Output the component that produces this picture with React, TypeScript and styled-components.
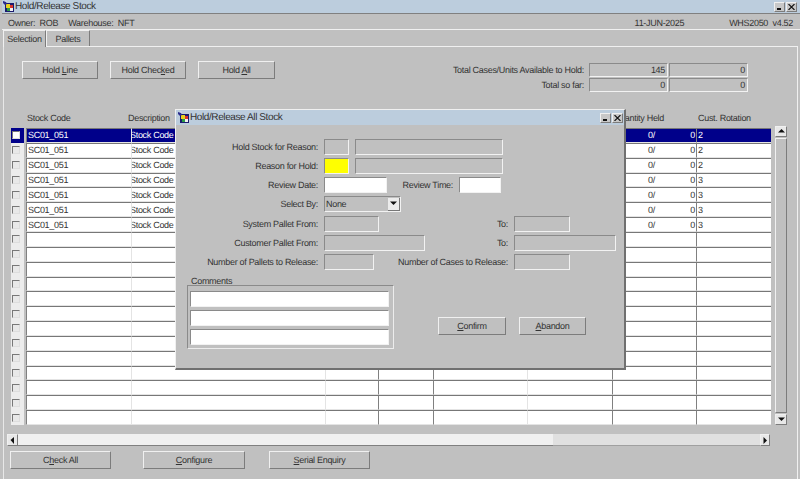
import React from "react";
import styled, { createGlobalStyle, css } from "styled-components";

const Global = createGlobalStyle`
  html, body { margin: 0; padding: 0; background: #c0c0c0; }
  * { box-sizing: border-box; }
`;

const bevelIn = css`
  border-style: solid;
  border-width: 1.5px;
  border-color: #8a8a8a #f2f2f2 #f2f2f2 #8a8a8a;
`;
const bevelOut = css`
  border-style: solid;
  border-width: 1.5px;
  border-color: #f0f0f0 #7c7c7c #7c7c7c #f0f0f0;
`;

const Screen = styled.div`
  position: relative;
  width: 800px;
  height: 479px;
  overflow: hidden;
  background: #c0c0c0;
  color: #333;
  font-family: "Liberation Sans", Arial, sans-serif;
  font-size: 9px;
  letter-spacing: -0.3px;
  text-rendering: geometricPrecision;
  display: flex;
  flex-direction: column;
  padding-left: 2px;
`;

const TitleBar = styled.div<{ $dialog?: boolean }>`
  flex: none;
  height: ${(p) => (p.$dialog ? 15 : 13)}px;
  background: #bccddd;
  display: flex;
  align-items: center;
  font-size: 10px;
  letter-spacing: -0.4px;
  color: #333;
  padding-left: ${(p) => (p.$dialog ? 1 : 0)}px;
  padding-right: ${(p) => (p.$dialog ? 1 : 3)}px;
`;
const TitleText = styled.span`
  flex: 1;
`;
const WinButton = styled.button`
  width: 11px;
  height: 10px;
  margin-left: 1px;
  padding: 0;
  background: #c8c8c8;
  ${bevelOut};
  border-width: 1px;
  color: #111;
  display: flex;
  align-items: center;
  justify-content: center;
`;

const StatusBar = styled.div`
  flex: none;
  height: 17px;
  border-top: 1px solid #808080;
  border-bottom: 1.5px solid #f0f0f0;
  display: flex;
  align-items: center;
  padding: 2px 7px 0 6px;
  gap: 10px;
`;
const Spacer = styled.span`
  flex: 1;
`;
const StatusDate = styled.span`
  margin-right: 35px;
`;

const Tabs = styled.div`
  flex: none;
  height: 16px;
  display: flex;
  align-items: flex-start;
  padding-left: 1px;
`;
const Tab = styled.div<{ $active?: boolean }>`
  position: relative;
  z-index: 1;
  background: #c0c0c0;
  display: flex;
  align-items: center;
  justify-content: center;
  width: ${(p) => (p.$active ? 43 : 44)}px;
  height: ${(p) => (p.$active ? 17 : 16)}px;
  border-left: 1px solid #f0f0f0;
  border-right: 1.5px solid #7c7c7c;
  border-top: 1px solid #f0f0f0;
`;

const Panel = styled.div`
  flex: 1;
  margin-right: 2px;
  margin-left: 1px;
  border-top: 1px solid #f0f0f0;
  border-left: 1px solid #e8e8e8;
  border-right: 1.5px solid #f0f0f0;
  display: flex;
  flex-direction: column;
`;

const Top = styled.div`
  flex: none;
  height: 66px;
  padding: 14px 49px 0 18px;
  display: flex;
  align-items: flex-start;
`;
const ActionRow = styled.div<{ $gap: number }>`
  display: flex;
  gap: ${(p) => p.$gap}px;
`;
const Button = styled.div<{ $w: number; $h?: number }>`
  width: ${(p) => p.$w}px;
  height: ${(p) => p.$h ?? 18}px;
  ${bevelOut};
  display: flex;
  align-items: center;
  justify-content: center;
  white-space: pre;
`;
const Mn = styled.span`
  text-decoration: underline;
`;

const Summary = styled.div`
  margin-left: auto;
  margin-top: 1px;
  display: grid;
  grid-template-columns: auto 79px 79px;
  grid-auto-rows: 15px;
  column-gap: 1px;
  align-items: center;
`;
const SummaryLabel = styled.span`
  text-align: right;
  margin-right: 4px;
`;
const Readout = styled.div`
  height: 14px;
  ${bevelIn};
  display: flex;
  align-items: center;
  justify-content: flex-end;
  padding-right: 2px;
`;

const TableArea = styled.div`
  flex: none;
  display: flex;
  padding-left: 7px;
  gap: 4px;
`;
const Table = styled.div`
  width: 760px;
`;
const gridCols = "15px 105px 194px 53px 55px 94px 85px 84px 75px";
const HeadRow = styled.div`
  height: 15px;
  display: grid;
  grid-template-columns: ${gridCols};
  align-items: start;
  line-height: 11px;
`;
const Head = styled.span<{ $end?: boolean; $pad?: number }>`
  white-space: nowrap;
  margin-left: ${(p) => p.$pad ?? 0}px;
  ${(p) => p.$end && "display:flex; justify-content:flex-end; padding-right: 32px;"}
`;
const Body = styled.div`
  height: 297px;
  display: grid;
  grid-template-rows: repeat(20, 1fr);
`;
const Row = styled.div<{ $selected?: boolean }>`
  display: grid;
  grid-template-columns: ${gridCols};
  color: ${(p) => (p.$selected ? "#fff" : "#333")};
`;
const CheckCell = styled.div<{ $selected?: boolean }>`
  display: flex;
  align-items: center;
  padding-left: 1px;
  margin-right: 2px;
  background: ${(p) => (p.$selected ? "#00008a" : "#ececec")};
`;
const Check = styled.span<{ $selected?: boolean }>`
  width: 8px;
  height: 8px;
  background: ${(p) => (p.$selected ? "#fff" : "#e8e8e8")};
  border-style: solid;
  border-width: 1px;
  border-color: #777 #ddd #ddd #777;
`;
const Cell = styled.div<{ $selected?: boolean; $light?: boolean; $between?: boolean; $inset?: number }>`
  background: ${(p) => (p.$selected ? "#00008a" : "#fff")};
  border-top: 1.5px solid #777;
  border-bottom: 1.5px solid #e4e4e4;
  border-left: 1.5px solid ${(p) => (p.$light ? "#e4e4e4" : "#808080")};
  overflow: hidden;
  white-space: nowrap;
  display: flex;
  align-items: center;
  justify-content: ${(p) => (p.$between ? "space-between" : "flex-start")};
  padding: 0 ${(p) => (p.$between ? 1 : 0)}px 0 ${(p) => p.$inset ?? 1}px;
`;
const Clipped = styled.span`
  margin-left: -3px;
`;

const VScroll = styled.div`
  margin-top: 13px;
  width: 12px;
  height: 299px;
  display: flex;
  flex-direction: column;
`;
const ScrollBtn = styled.div<{ $w?: number; $h?: number }>`
  flex: none;
  width: ${(p) => p.$w ?? 12}px;
  height: ${(p) => p.$h ?? 11}px;
  background: #e8e8e8;
  ${bevelOut};
  border-width: 1px;
  display: flex;
  align-items: center;
  justify-content: center;
`;
const VThumb = styled.div`
  flex: 1;
  margin: 1px 0;
  ${bevelOut};
  border-width: 1px;
  background: #c0c0c0;
`;
const HScroll = styled.div`
  margin: 9px 0 0 3px;
  width: 763px;
  height: 12px;
  display: flex;
`;
const HThumb = styled.div`
  width: 535px;
  background: #f0f0f0;
  border-bottom: 1px solid #808080;
`;
const HTrack = styled.div`
  flex: 1;
  background: #e0e0e0;
  border-bottom: 1px solid #a0a0a0;
`;
const Bottom = styled.div`
  margin: 5px 0 0 6px;
  display: flex;
`;
const BottomBtn = styled(Button)<{ $ml?: number }>`
  margin-left: ${(p) => p.$ml ?? 0}px;
`;

const Dialog = styled.div`
  position: absolute;
  z-index: 2;
  left: 175px;
  top: 109px;
  width: 451px;
  height: 261px;
  background: #c0c0c0;
  border-style: solid;
  border-width: 1.5px 2px 2px 1.5px;
  border-color: #f0f0f0 #707070 #707070 #f0f0f0;
  display: flex;
  flex-direction: column;
`;
const DialogBody = styled.div`
  flex: 1;
  padding-top: 14px;
  display: flex;
  flex-direction: column;
`;
const FormRow = styled.div`
  height: 19.17px;
  display: flex;
  align-items: flex-start;
  gap: 6px;
`;
const Label = styled.span<{ $w: number }>`
  width: ${(p) => p.$w}px;
  flex: none;
  height: 16px;
  line-height: 17px;
  text-align: right;
  white-space: nowrap;
`;
const Field = styled.div<{ $w: number; $bg?: string }>`
  flex: none;
  width: ${(p) => p.$w}px;
  height: 16px;
  background: ${(p) => p.$bg ?? "transparent"};
  ${bevelIn};
`;
const SelectBox = styled.div`
  flex: none;
  width: 77px;
  height: 16px;
  ${bevelIn};
  display: flex;
  align-items: center;
  justify-content: space-between;
  padding-left: 1px;
`;
const DropBtn = styled.span`
  width: 12px;
  height: 13px;
  background: #ececec;
  border-right: 1px solid #777;
  border-bottom: 1px solid #777;
  display: flex;
  align-items: center;
  justify-content: center;
`;
const Lower = styled.div`
  margin-top: 1px;
  display: flex;
  align-items: flex-start;
`;
const CommentsGroup = styled.div`
  margin-left: 11px;
  width: 207px;
`;
const CommentsLabel = styled.div`
  height: 11px;
  line-height: 14px;
  padding-left: 4px;
`;
const CommentsBox = styled.div`
  height: 64px;
  border-style: solid;
  border-width: 1px;
  border-color: #8a8a8a #ececec #ececec #8a8a8a;
  padding: 5px 4px 0 2px;
  display: flex;
  flex-direction: column;
  gap: 3px;
`;
const CommentInput = styled.div`
  height: 16px;
  background: #fff;
  ${bevelIn};
`;
const DialogActions = styled.div`
  margin: 43px 0 0 44px;
`;

const AppIcon = () => (
  <svg width="13" height="13" viewBox="0 0 13 13" style={{ flex: "none" }}>
    <rect x="3" y="3" width="9" height="9" fill="#1a1a6e" />
    <rect x="4" y="4" width="4" height="4" fill="#e8d21c" />
    <rect x="8" y="5" width="3" height="3" fill="#d8342c" />
    <rect x="5" y="8" width="3" height="3" fill="#2c9c44" />
    <rect x="8" y="8" width="3" height="3" fill="#f2f2f2" />
    <path d="M1 1l3 1 1 2-2 1-2-2z" fill="#2b2b8c" />
    <path d="M3 0l2 1-1 1z" fill="#d9d9ff" />
  </svg>
);
const MinIcon = () => (
  <svg width="7" height="6" viewBox="0 0 7 6">
    <rect x="1" y="4" width="4" height="2" fill="#111" />
  </svg>
);
const CloseIcon = () => (
  <svg width="7" height="6" viewBox="0 0 7 6">
    <path d="M0.5 0l6 6M6.5 0l-6 6" stroke="#111" strokeWidth="1.1" fill="none" />
  </svg>
);
const Tri = ({ dir }: { dir: "up" | "down" | "left" | "right" }) => {
  const d = {
    up: "M3.5 1L7 4.5H0z",
    down: "M0 1.5h7L3.5 5z",
    left: "M1.5 3L5 0v7z",
    right: "M5 3.5L1.5 0v7z",
  }[dir];
  return (
    <svg width="7" height="7" viewBox="0 0 7 7">
      <path d={d} fill="#111" />
    </svg>
  );
};

const rotations = [2, 2, 2, 3, 3, 3, 3];

const TableRow = ({ index }: { index: number }) => {
  const filled = index < rotations.length;
  const sel = index === 0;
  return (
    <Row $selected={sel}>
      <CheckCell $selected={sel}>
        <Check $selected={sel} />
      </CheckCell>
      <Cell $selected={sel} $inset={1}>{filled && "SC01_051"}</Cell>
      <Cell $selected={sel} $light>{filled && <Clipped>Stock Code 0</Clipped>}</Cell>
      <Cell $selected={sel} $light />
      <Cell $selected={sel} />
      <Cell $selected={sel} />
      <Cell $selected={sel} $light />
      <Cell $selected={sel} $between $inset={35}>
        {filled && (
          <>
            <span>0/</span>
            <span>0</span>
          </>
        )}
      </Cell>
      <Cell $selected={sel}>{filled && rotations[index]}</Cell>
    </Row>
  );
};

export default function App() {
  return (
    <Screen>
      <Global />
      <TitleBar>
        <AppIcon />
        <TitleText>Hold/Release Stock</TitleText>
        <WinButton aria-label="Minimise"><MinIcon /></WinButton>
        <WinButton aria-label="Close"><CloseIcon /></WinButton>
      </TitleBar>
      <StatusBar>
        <span>Owner:&nbsp; ROB</span>
        <span>Warehouse:&nbsp; NFT</span>
        <Spacer />
        <StatusDate>11-JUN-2025</StatusDate>
        <span>WHS2050&nbsp; v4.52</span>
      </StatusBar>
      <Tabs>
        <Tab $active>Selection</Tab>
        <Tab>Pallets</Tab>
      </Tabs>
      <Panel>
        <Top>
          <ActionRow $gap={12}>
            <Button $w={76}><span>Hold <Mn>L</Mn>ine</span></Button>
            <Button $w={76}><span>Hold Chec<Mn>k</Mn>ed</span></Button>
            <Button $w={77}><span>Hold <Mn>A</Mn>ll</span></Button>
          </ActionRow>
          <Summary>
            <SummaryLabel>Total Cases/Units Available to Hold:</SummaryLabel>
            <Readout>145</Readout>
            <Readout>0</Readout>
            <SummaryLabel>Total so far:</SummaryLabel>
            <Readout>0</Readout>
            <Readout>0</Readout>
          </Summary>
        </Top>
        <TableArea>
          <Table>
            <HeadRow>
              <span />
              <Head $pad={1}>Stock Code</Head>
              <Head $pad={-3}>Description</Head>
              <span />
              <span />
              <span />
              <span />
              <Head $end>Quantity Held</Head>
              <Head $pad={2}>Cust. Rotation</Head>
            </HeadRow>
            <Body>
              {Array.from({ length: 20 }, (_, i) => (
                <TableRow key={i} index={i} />
              ))}
            </Body>
          </Table>
          <VScroll>
            <ScrollBtn><Tri dir="up" /></ScrollBtn>
            <VThumb />
            <ScrollBtn><Tri dir="down" /></ScrollBtn>
          </VScroll>
        </TableArea>
        <HScroll>
          <ScrollBtn $w={11} $h={12}><Tri dir="left" /></ScrollBtn>
          <HThumb />
          <HTrack />
          <ScrollBtn $w={10} $h={12}><Tri dir="right" /></ScrollBtn>
        </HScroll>
        <Bottom>
          <BottomBtn $w={101}><span>C<Mn>h</Mn>eck All</span></BottomBtn>
          <BottomBtn $w={102} $ml={32}><span><Mn>C</Mn>onfigure</span></BottomBtn>
          <BottomBtn $w={101} $ml={24}><span><Mn>S</Mn>erial Enquiry</span></BottomBtn>
        </Bottom>
      </Panel>

      <Dialog>
        <TitleBar $dialog>
          <AppIcon />
          <TitleText>Hold/Release All Stock</TitleText>
          <WinButton aria-label="Minimise"><MinIcon /></WinButton>
          <WinButton aria-label="Close"><CloseIcon /></WinButton>
        </TitleBar>
        <DialogBody>
          <FormRow>
            <Label $w={142}>Hold Stock for Reason:</Label>
            <Field $w={25} />
            <Field $w={148} />
          </FormRow>
          <FormRow>
            <Label $w={142}>Reason for Hold:</Label>
            <Field $w={25} $bg="#ffff00" />
            <Field $w={148} />
          </FormRow>
          <FormRow>
            <Label $w={142}>Review Date:</Label>
            <Field $w={63} $bg="#fff" />
            <Label $w={60}>Review Time:</Label>
            <Field $w={42} $bg="#fff" />
          </FormRow>
          <FormRow>
            <Label $w={142}>Select By:</Label>
            <SelectBox>
              None
              <DropBtn><Tri dir="down" /></DropBtn>
            </SelectBox>
          </FormRow>
          <FormRow>
            <Label $w={142}>System Pallet From:</Label>
            <Field $w={55} />
            <Label $w={123}>To:</Label>
            <Field $w={56} />
          </FormRow>
          <FormRow>
            <Label $w={142}>Customer Pallet From:</Label>
            <Field $w={101} />
            <Label $w={77}>To:</Label>
            <Field $w={102} />
          </FormRow>
          <FormRow>
            <Label $w={142}>Number of Pallets to Release:</Label>
            <Field $w={50} />
            <Label $w={128}>Number of Cases to Release:</Label>
            <Field $w={56} />
          </FormRow>
          <Lower>
            <CommentsGroup>
              <CommentsLabel>Comments</CommentsLabel>
              <CommentsBox>
                <CommentInput />
                <CommentInput />
                <CommentInput />
              </CommentsBox>
            </CommentsGroup>
            <DialogActions>
              <ActionRow $gap={13}>
                <Button $w={68}><span><Mn>C</Mn>onfirm</span></Button>
                <Button $w={67}><span><Mn>A</Mn>bandon</span></Button>
              </ActionRow>
            </DialogActions>
          </Lower>
        </DialogBody>
      </Dialog>
    </Screen>
  );
}
